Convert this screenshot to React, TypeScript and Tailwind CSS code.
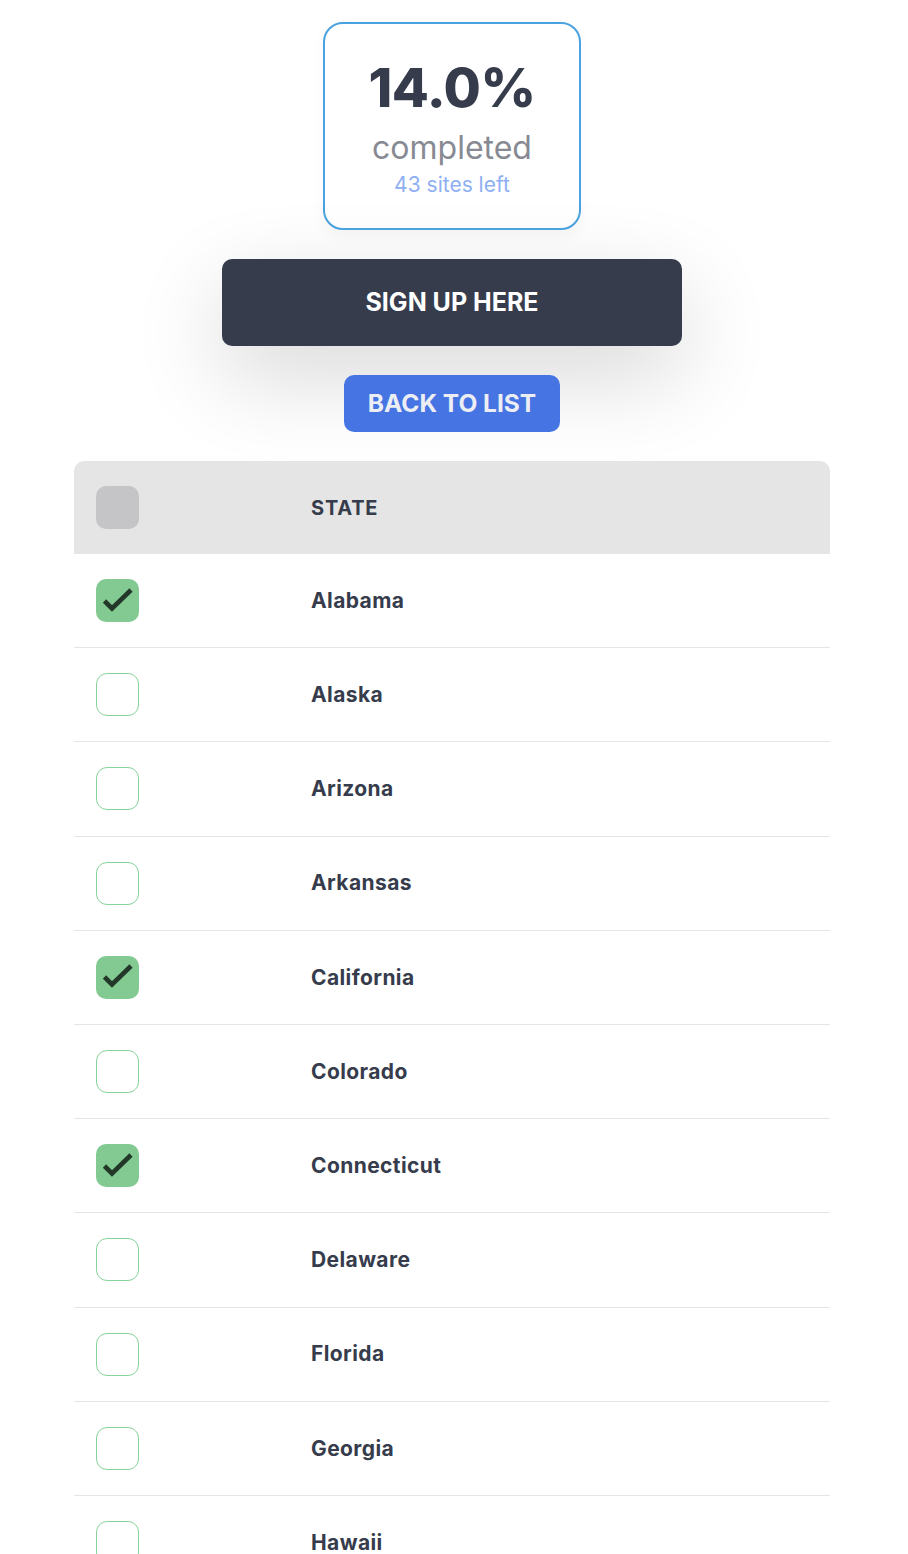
const states = [
  { name: 'Alabama', done: true },
  { name: 'Alaska', done: false },
  { name: 'Arizona', done: false },
  { name: 'Arkansas', done: false },
  { name: 'California', done: true },
  { name: 'Colorado', done: false },
  { name: 'Connecticut', done: true },
  { name: 'Delaware', done: false },
  { name: 'Florida', done: false },
  { name: 'Georgia', done: false },
  { name: 'Hawaii', done: false },
];

function Checkbox({ checked }: { checked: boolean }) {
  if (checked) {
    return (
      <div className="w-[43px] h-[43px] rounded-[10px] bg-[#82ca91] flex items-center justify-center">
        <svg width="32" height="32" viewBox="0 0 32 32" fill="none">
          <path d="M2.5 16l7.5 7.5L29 5" stroke="#233829" strokeWidth="4.6" strokeLinecap="butt" strokeLinejoin="miter" />
        </svg>
      </div>
    );
  }
  return <div className="w-[43px] h-[43px] rounded-[11px] border border-[#86d39a] bg-white" />;
}

export default function App() {
  return (
    <div className="min-h-screen bg-white font-['Inter',sans-serif] text-[#363c4c]">
      <div className="w-[904px]">
        <div className="flex flex-col items-center pt-[22px]">
          <div className="w-[258px] h-[208px] rounded-[20px] border-[2.5px] border-[#4aa3e0] bg-white shadow-[0_6px_16px_rgba(0,0,0,0.04)] flex flex-col items-center pt-[31px]">
            <div className="text-[54px] leading-[66px] font-extrabold tracking-[-0.5px] text-[#363c4c]">14.0%</div>
            <div className="text-[32px] leading-[38px] text-[#878a93] mt-[8px]">completed</div>
            <div className="text-[21px] leading-[28px] text-[#8eaff3] mt-[4px]">43 sites left</div>
          </div>

          <button className="mt-[29px] w-[460px] h-[87px] rounded-[10px] bg-[#363c4c] text-white text-[25px] font-bold shadow-[0_30px_90px_rgba(0,0,0,0.16)]">
            SIGN UP HERE
          </button>

          <button className="mt-[29px] w-[216px] h-[57px] rounded-[10px] bg-[#4675e3] text-[#eceef3] text-[24.5px] font-bold">
            BACK TO LIST
          </button>
        </div>

        <div className="mx-[74px] mt-[29px]">
          <div className="h-[93px] rounded-t-[10px] bg-[#e5e5e5] flex items-center">
            <div className="w-[237px] pl-[22px]">
              <div className="w-[43px] h-[43px] rounded-[10px] bg-[#c5c5c7]" />
            </div>
            <div className="text-[20px] font-bold tracking-[0.8px] text-[#363c4c]">STATE</div>
          </div>
          {states.map((s) => (
            <div key={s.name} className="h-[94.2px] border-b border-[#e5e5e5] flex items-center">
              <div className="w-[237px] pl-[22px]">
                <Checkbox checked={s.done} />
              </div>
              <div className="text-[21px] font-bold tracking-[0.4px] text-[#363c4c]">{s.name}</div>
            </div>
          ))}
        </div>
      </div>
    </div>
  );
}
